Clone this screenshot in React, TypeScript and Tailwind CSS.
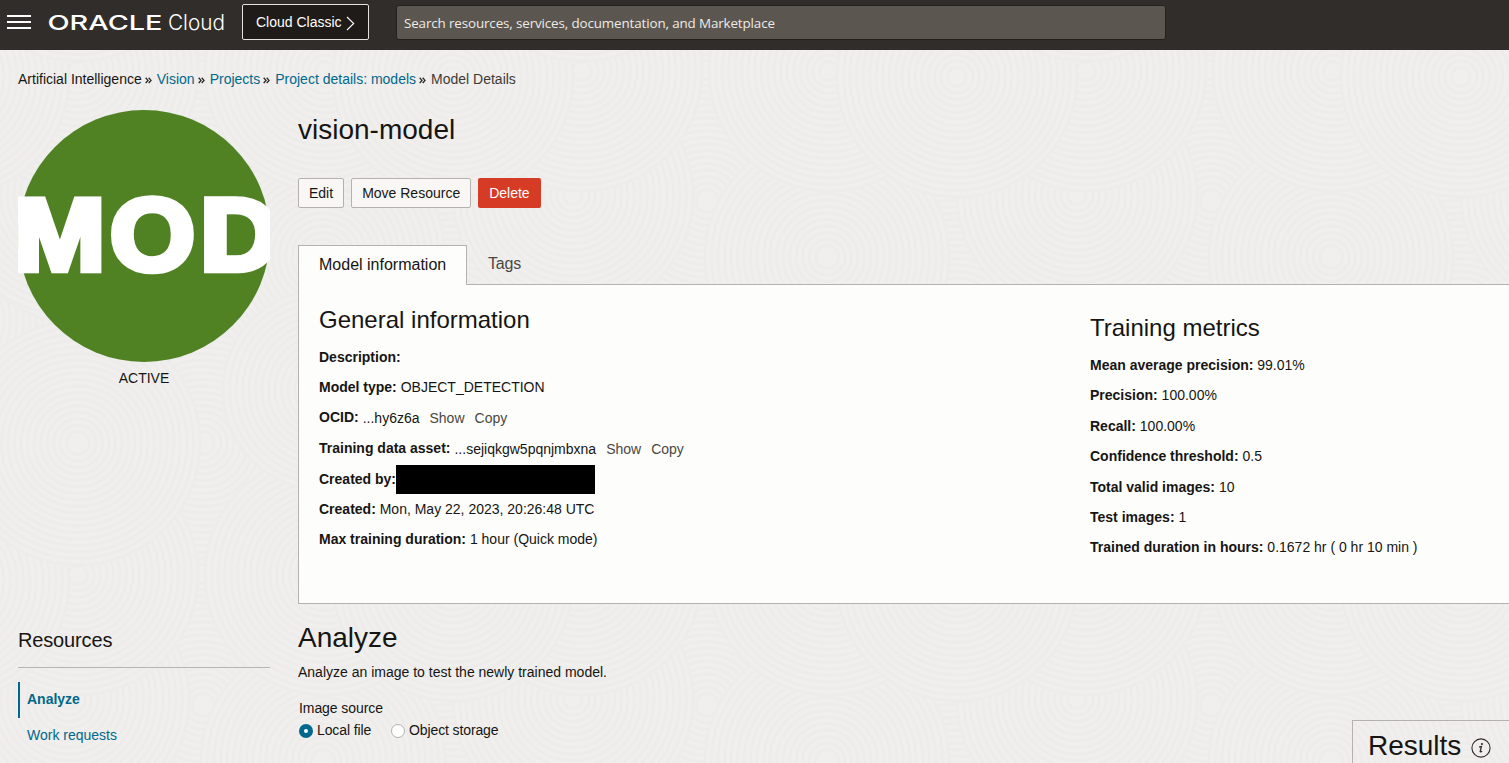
import type { ReactNode } from "react";

type Swirl = { x: number; y: number; r: number };

const TILE = 504;

const swirls: Swirl[] = [
  { x: 453, y: 320, r: 120 },
  { x: 200, y: 320, r: 120 },
  { x: 78, y: 201, r: 122 },
  { x: 203, y: 443, r: 122 },
  { x: 453, y: 443, r: 110 },
  { x: 203, y: 201, r: 122 },
  { x: 323, y: 257, r: 122 },
  { x: 573, y: 195, r: 120 },
  { x: 78, y: 71, r: 120 },
  { x: 325, y: 71, r: 120 },
  { x: 453, y: 77, r: 120 },
  { x: 323, y: 390, r: 100 },
  { x: 78, y: 443, r: 122 },
];

const offsets = [-TILE, 0, TILE];

function SwirlBackground() {
  return (
    <svg className="absolute inset-0 h-full w-full" aria-hidden="true">
      <defs>
        <pattern id="swirl" width={TILE} height={TILE} patternUnits="userSpaceOnUse">
          {swirls.map((s) =>
            offsets.map((dx) =>
              offsets.map((dy) => (
                <g key={`${s.x}-${s.y}-${dx}-${dy}`} transform={`translate(${s.x + dx} ${s.y + dy})`}>
                  <circle r={s.r} fill="#f0efed" />
                  {Array.from({ length: Math.floor(s.r / 6.5) }, (_, i) => (
                    <circle key={i} r={s.r - i * 6.5} fill="none" stroke="#edecea" strokeWidth="2.4" />
                  ))}
                </g>
              )),
            ),
          )}
        </pattern>
      </defs>
      <rect width="100%" height="100%" fill="url(#swirl)" />
    </svg>
  );
}

function Header() {
  return (
    <header className="relative flex h-[50px] shrink-0 items-start bg-[#312d2a]">
      <button className="ml-[7px] mt-[15px] flex w-6 flex-col gap-1" aria-label="Menu">
        <span className="h-[2px] w-full bg-white" />
        <span className="h-[2px] w-full bg-white" />
        <span className="h-[2px] w-full bg-white" />
      </button>
      <svg className="ml-[16px] mt-[8px] h-[30px] w-[180px]" fill="#fff">
        <text x="0.5" y="22" fontFamily="Inter, sans-serif" fontWeight="500" fontSize="20.5" textLength="115" lengthAdjust="spacingAndGlyphs">
          ORACLE
        </text>
        <text x="121" y="22" fontFamily="Inter, sans-serif" fontWeight="300" fontSize="21.5" textLength="57" lengthAdjust="spacingAndGlyphs">
          Cloud
        </text>
      </svg>
      <button className="ml-[15px] mt-1 flex h-9 w-[127px] items-center rounded-[2px] border border-[#e5e2df] bg-[#1f1b18] pl-[13px] text-white">
        Cloud Classic
        <svg className="ml-[4px] mt-[2px] h-[15px] w-[9px]" fill="none" stroke="#fff" strokeWidth="1.1">
          <path d="M1 1 L7.7 7.5 L1 14" />
        </svg>
      </button>
      <div className="ml-[27px] mt-[5px] flex h-[35px] w-[770px] items-center rounded-[3px] border border-[#24201e] bg-[#5b564f] pl-[7px] pt-[2px] font-['Open_Sans',sans-serif] text-[13.4px] tracking-[-0.125px] text-[#eeebe7]">
        Search resources, services, documentation, and Marketplace
      </div>
    </header>
  );
}

const crumbs = ["Vision", "Projects", "Project details: models"];

function Separator() {
  return (
    <svg className="ml-[3px] mr-[5px] mt-[3px] h-[7px] w-[7px]" fill="none" stroke="#2b2826" strokeWidth="1.3">
      <path d="M0.7 0.8 L3 3.4 L0.7 6 M3.7 0.8 L6 3.4 L3.7 6" />
    </svg>
  );
}

function Breadcrumbs() {
  return (
    <nav className="flex h-[60px] items-center pb-[2px] pl-[18px]">
      <span className="text-[#161513]">Artificial Intelligence</span>
      <Separator />
      {crumbs.map((c) => (
        <span key={c} className="flex items-center">
          <a className="text-[#00688c]">{c}</a>
          <Separator />
        </span>
      ))}
      <span className="text-[#3f3b38]">Model Details</span>
    </nav>
  );
}

function Row({ label, tall, children }: { label: string; tall?: boolean; children?: ReactNode }) {
  return (
    <div className={`flex items-start whitespace-pre pt-[5px] leading-5 ${tall ? "h-[31px]" : "h-[30px]"}`}>
      <b>{label}</b>
      {children}
    </div>
  );
}

function Ocid({ value }: { value: string }) {
  return (
    <span className="ml-1 mt-px flex gap-[10px]">
      <span>...{value}</span>
      <a className="text-[#4b4744]">Show</a>
      <a className="text-[#4b4744]">Copy</a>
    </span>
  );
}

const metrics: [string, string, boolean][] = [
  ["Mean average precision:", "99.01%", false],
  ["Precision:", "100.00%", true],
  ["Recall:", "100.00%", false],
  ["Confidence threshold:", "0.5", true],
  ["Total valid images:", "10", false],
  ["Test images:", "1", false],
  ["Trained duration in hours:", "0.1672 hr ( 0 hr 10 min )", false],
];

function ModelPanel() {
  return (
    <section className="mt-[37px]">
      <div className="flex h-10">
        <div className="relative z-10 h-10 w-[169px] border border-b-0 border-[#b5b1ac] bg-[#fdfdfb] pl-5 pt-[7px] text-base">
          Model information
        </div>
        <div className="flex-1 border-b border-[#b5b1ac] pl-[21px] pt-[7px] text-base tracking-[-0.2px] text-[#4b4744]">
          Tags
        </div>
      </div>
      <div className="flex h-[319px] border-b border-l border-[#b5b1ac] bg-[#fdfdfb] pl-5">
        <div className="w-[771px] pt-[17px]">
          <h2 className="mb-1 text-2xl leading-9">General information</h2>
          <Row label="Description:" />
          <Row label="Model type:"> OBJECT_DETECTION</Row>
          <Row label="OCID:" tall>
            <Ocid value="hy6z6a" />
          </Row>
          <Row label="Training data asset:" tall>
            <Ocid value="sejiqkgw5pqnjmbxna" />
          </Row>
          <Row label="Created by:">
            <span className="-mt-1 h-[29px] w-[199px] shrink-0 bg-black" />
          </Row>
          <Row label="Created:"> Mon, May 22, 2023, 20:26:48 UTC</Row>
          <Row label="Max training duration:"> 1 hour (Quick mode)</Row>
        </div>
        <div className="pt-[25px]">
          <h2 className="mb-1 text-2xl leading-9">Training metrics</h2>
          {metrics.map(([label, value, tall]) => (
            <Row key={label} label={label} tall={tall}>
              {" " + value}
            </Row>
          ))}
        </div>
      </div>
    </section>
  );
}

function Sidebar() {
  return (
    <aside className="w-[252px] shrink-0">
      <div className="h-[252px]">
        <svg className="h-[252px] w-[252px] overflow-hidden" viewBox="0 0 252 252">
          <circle cx="126" cy="126" r="126" fill="#508223" />
          <text
            x="-3.5 86 170.4"
            y="159.8"
            transform="scale(1.07 1)"
            fill="#fff"
            stroke="#fff"
            strokeWidth="6.5"
            fontFamily="Liberation Sans, Arial, sans-serif"
            fontWeight="700"
            fontSize="102"
          >
            MOD
          </text>
        </svg>
      </div>
      <div className="mt-[6px] text-center leading-5">ACTIVE</div>
      <h3 className="mt-[239px] h-[41px] border-b border-[#b5b5b1] text-xl leading-[26px] tracking-[-0.15px]">Resources</h3>
      <div className="mt-[14px] flex h-9 items-center border-l-2 border-[#00688c] pb-[2px] pl-[7px] font-bold text-[#00688c]">
        Analyze
      </div>
      <div className="flex h-9 items-center pb-[2px] pl-[9px] text-[#00688c]">Work requests</div>
    </aside>
  );
}

function AnalyzeSection() {
  return (
    <section className="flex">
      <div className="flex-1">
        <h2 className="mt-[16px] text-[28px] leading-9">Analyze</h2>
        <p className="mt-[6px] leading-5">Analyze an image to test the newly trained model.</p>
        <p className="ml-px mt-[16px] leading-5 tracking-[-0.08px]">Image source</p>
        <div className="ml-px mt-[2px] flex h-5 items-center tracking-[-0.12px]">
          <span className="mr-1 mt-[2px] flex size-[14px] items-center justify-center rounded-full bg-[#00688c]">
            <span className="size-1 rounded-full bg-white" />
          </span>
          Local file
          <span className="ml-5 mr-1 mt-[2px] size-[14px] rounded-full border border-[#b5b1ac] bg-white" />
          Object storage
        </div>
      </div>
      <div className="mt-[116px] flex h-16 w-[157px] items-start border-l border-t border-[#b5b1ac] pl-[15px] pt-[7px]">
        <span className="text-[28px] leading-9">Results</span>
        <svg className="ml-[10px] mt-[10px] size-5" viewBox="0 0 20 20" fill="none">
          <circle cx="10" cy="10" r="9.1" stroke="#312d2a" strokeWidth="1.1" />
          <circle cx="10.9" cy="6" r="1.1" fill="#312d2a" />
          <path d="M8.2 9 L10.4 8.6 L9.2 13.4 Q9.2 14.3 11.2 13.2" stroke="#312d2a" strokeWidth="1.3" />
        </svg>
      </div>
    </section>
  );
}

export default function App() {
  return (
    <div className="relative h-[763px] w-[1509px] overflow-hidden bg-[#f0efed] font-['Liberation_Sans',Arial,sans-serif] text-sm text-[#161513]">
      <SwirlBackground />
      <div className="relative flex flex-col">
        <Header />
        <Breadcrumbs />
        <main className="flex pl-[18px]">
          <Sidebar />
          <div className="ml-7 flex-1">
            <h1 className="pt-[2px] text-[28px] leading-9">vision-model</h1>
            <div className="mt-[30px] flex h-[30px] gap-[7px]">
              <button className="rounded-[2px] border border-[#b5b1ac] bg-[#f8f7f5] px-[10px]">Edit</button>
              <button className="rounded-[2px] border border-[#b5b1ac] bg-[#f8f7f5] px-[10px]">Move Resource</button>
              <button className="rounded-[2px] bg-[#d63b25] px-[11px] text-white">Delete</button>
            </div>
            <ModelPanel />
            <AnalyzeSection />
          </div>
        </main>
      </div>
    </div>
  );
}
